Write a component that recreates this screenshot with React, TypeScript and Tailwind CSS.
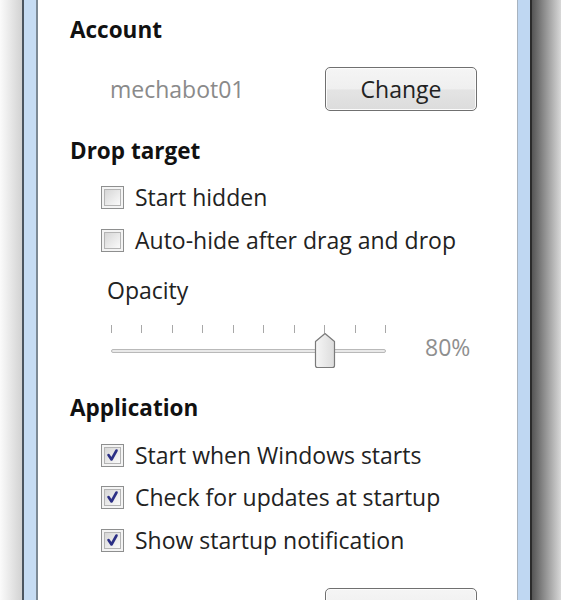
import React from "react";

const font = { fontFamily: '"Open Sans", "Noto Sans", "Liberation Sans", sans-serif' };

const CheckBox: React.FC<{ checked?: boolean }> = ({ checked }) => {
  return (
    <div className="flex h-[23px] w-[23px] shrink-0 items-center justify-center border border-[#8e8f8f] bg-[#f4f4f4]">
      <div className="relative flex h-[17px] w-[17px] items-center justify-center border border-[#b4b4b4] bg-[linear-gradient(135deg,#d6d6d6_0%,#ececec_60%,#fafafa_100%)]">
        {checked && (
          <svg width="15" height="15" viewBox="0 0 15 15" className="absolute">
            <path
              d="M3.5 7 L6.5 11.5 L11.5 2.5"
              fill="none"
              stroke="#2b2f85"
              strokeWidth="2.6"
              strokeLinecap="round"
              strokeLinejoin="round"
            />
          </svg>
        )}
      </div>
    </div>
  );
};

const Row: React.FC<{ label: string; checked?: boolean; className: string }> = ({ label, checked, className }) => (
  <div className={`flex h-[30px] shrink-0 items-center gap-[11px] pl-[31px] ${className}`}>
    <CheckBox checked={checked} />
    <span className="text-[23px] leading-none text-[#222]">{label}</span>
  </div>
);

const Button: React.FC<{ label?: string; className: string }> = ({ label, className }) => (
  <button
    className={`flex h-[44px] w-[152px] shrink-0 items-center justify-center rounded-[5px] border border-[#707070] bg-[linear-gradient(to_bottom,#f5f5f5_0%,#efefef_50%,#e4e4e4_52%,#dcdcdc_100%)] text-[23px] text-[#222] shadow-[inset_0_0_0_1px_#fcfcfc] ${className}`}
  >
    {label}
  </button>
);

const ticks = [0, 1, 2, 3, 4, 5, 6, 7, 8, 9];

export default function App() {
  return (
    <div className="flex h-[600px] w-[561px] overflow-hidden bg-white" style={font}>
      {/* left frame */}
      <div className="w-[22px] shrink-0 bg-[linear-gradient(to_right,#fbfbfb,#d2d2d2)]" />
      <div className="w-[2px] shrink-0 bg-[#4b5560]" />
      <div className="w-[12px] shrink-0 bg-[#c6dcf3]" />
      <div className="w-[2px] shrink-0 bg-[#7c8995]" />

      {/* content */}
      <div className="flex w-[479px] shrink-0 flex-col bg-white pl-[32px]">
        <div className="mt-[16px] flex h-[28px] shrink-0 items-center text-[22.5px] font-bold text-[#111]">Account</div>

        <div className="mt-[23px] flex h-[44px] shrink-0 items-center">
          <span className="w-[255px] pl-[40px] text-[23px] text-[#8a8a8a]">mechabot01</span>
          <Button label="Change" className="" />
        </div>

        <div className="mt-[26px] flex h-[28px] shrink-0 items-center text-[22.5px] font-bold text-[#111]">Drop target</div>

        <Row label="Start hidden" className="mt-[17px]" />
        <Row label="Auto-hide after drag and drop" className="mt-[13px]" />

        <div className="mt-[21px] flex h-[28px] shrink-0 items-center pl-[37px] text-[23px] text-[#222]">Opacity</div>

        <div className="mt-[16px] flex h-[52px] shrink-0 items-start pl-[41px]">
          <div className="relative h-[52px] w-[275px]">
            <div className="mt-[5px] flex h-[8px] justify-between">
              {ticks.map((t) => (
                <div key={t} className="h-[8px] w-[1px] bg-[#a8a8a8]" />
              ))}
            </div>
            <div className="mt-[16px] h-[4px] rounded-[2px] border border-[#b9b9b9] bg-[#e9e9e9] shadow-[0_1px_0_#ffffff]" />
            <svg width="22" height="37" viewBox="0 0 22 37" className="absolute left-[203px] top-[12px]">
              <defs>
                <linearGradient id="thumb" x1="0" y1="0" x2="1" y2="0">
                  <stop offset="0" stopColor="#f6f6f6" />
                  <stop offset="1" stopColor="#dcdcdc" />
                </linearGradient>
              </defs>
              <path
                d="M11 1.5 L20.5 9.5 L20.5 33.5 Q20.5 35.5 18.5 35.5 L3.5 35.5 Q1.5 35.5 1.5 33.5 L1.5 9.5 Z"
                fill="url(#thumb)"
                stroke="#7a7a7a"
                strokeWidth="1.2"
                strokeLinejoin="round"
              />
            </svg>
          </div>
          <span className="ml-[39px] mt-[14px] text-[23px] leading-[26px] text-[#8f8f8f]">80%</span>
        </div>

        <div className="mt-[22px] flex h-[28px] shrink-0 items-center text-[22.5px] font-bold text-[#111]">Application</div>

        <Row label="Start when Windows starts" checked className="mt-[18px]" />
        <Row label="Check for updates at startup" checked className="mt-[12px]" />
        <Row label="Show startup notification" checked className="mt-[13px]" />

        <div className="mt-[33px] flex shrink-0 pl-[255px]">
          <Button className="" />
        </div>
      </div>

      {/* right frame */}
      <div className="w-[1px] shrink-0 bg-[#a8b3bf]" />
      <div className="w-[12px] shrink-0 bg-[#bfd7f2]" />
      <div className="w-[2px] shrink-0 bg-[#2c2c2c]" />
      <div className="flex-1 bg-[linear-gradient(to_right,#555555,#8a8a8a_40%,#d8d8d8)]" />
    </div>
  );
}
